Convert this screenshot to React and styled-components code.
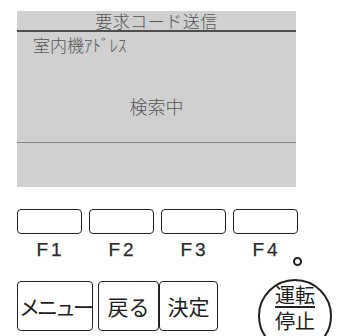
import React from 'react';
import styled, { createGlobalStyle } from 'styled-components';

const GlobalStyle = createGlobalStyle`
  html, body {
    margin: 0;
    padding: 0;
    background: #ffffff;
    overflow: hidden;
  }
  body {
    font-family: "Noto Sans CJK JP", "Liberation Sans", sans-serif;
  }
`;

const Panel = styled.div`
  width: 337px;
  height: 336px;
  padding: 11px 0 0 17px;
  box-sizing: border-box;
  overflow: hidden;
`;

const Screen = styled.div`
  width: 279px;
  height: 176px;
  background: #d0d0d0;
  display: flex;
  flex-direction: column;
  color: #555;
`;

const Title = styled.div`
  height: 19px;
  display: flex;
  align-items: flex-end;
  justify-content: center;
  font-size: 17px;
  font-weight: 300;
  line-height: 19px;
  letter-spacing: 0.5px;
  border-bottom: 2px solid #4e4e4e;
`;

const Body = styled.div`
  height: 110px;
  border-bottom: 1px solid #858585;
  display: flex;
  flex-direction: column;
`;

const Label = styled.div`
  padding: 3px 0 0 16px;
  font-size: 17px;
  font-weight: 300;
  line-height: 20px;
`;

const Status = styled.div`
  margin-top: 40px;
  text-align: center;
  font-size: 18px;
  font-weight: 300;
  line-height: 22px;
`;

const FGrid = styled.div`
  display: grid;
  grid-template-columns: repeat(4, 65px);
  column-gap: 7px;
  margin-top: ${p => p.$top}px;
`;

const FKey = styled.div`
  height: 25px;
  box-sizing: border-box;
  border: 1.5px solid #222;
  border-radius: 4px;
`;

const FLabel = styled.div`
  text-align: center;
  font-family: "Liberation Sans", Arial, sans-serif;
  font-size: 19px;
  line-height: 18px;
  letter-spacing: 3px;
  color: #2a2a2a;
  -webkit-text-stroke: 0.25px #2a2a2a;
  padding-left: 2px;
`;

const BottomRow = styled.div`
  display: flex;
  align-items: flex-start;
  margin-top: -2px;
`;

const KeyGroup = styled.div`
  display: flex;
  margin-top: 24px;
  gap: 5px;
`;

const Pair = styled.div`
  display: flex;
`;

const Key = styled.div`
  width: ${p => p.$w}px;
  height: 50px;
  box-sizing: border-box;
  border: 1.5px solid #222;
  border-radius: 4px;
  display: flex;
  align-items: center;
  justify-content: center;
  font-size: 21px;
  color: #1e1e1e;
  letter-spacing: ${p => p.$ls || 0}px;
`;

const PowerCol = styled.div`
  margin-left: auto;
  margin-right: 4px;
  display: flex;
  flex-direction: column;
  align-items: center;
  width: 76px;
`;

const Dot = styled.div`
  width: 9px;
  height: 9px;
  box-sizing: border-box;
  border: 2px solid #222;
  border-radius: 50%;
  margin-left: 4px;
`;

const PowerKey = styled.div`
  margin-top: 13px;
  width: 74px;
  height: 74px;
  box-sizing: border-box;
  border: 2px solid #222;
  border-radius: 50%;
  display: flex;
  flex-direction: column;
  align-items: center;
  padding-top: 3px;
  font-size: 20px;
  line-height: 21px;
  color: #1e1e1e;
`;

const PowerTop = styled.div`
  border-bottom: 2px solid #222;
  padding-bottom: 1px;
`;

const PowerBottom = styled.div`
  padding-top: 2px;
`;

export default function App() {
  return (
    <>
      <GlobalStyle />
      <Panel>
        <Screen>
          <Title>要求コード送信</Title>
          <Body>
            <Label>室内機ｱﾄﾞﾚｽ</Label>
            <Status>検索中</Status>
          </Body>
        </Screen>
        <FGrid $top={22}>
          <FKey /><FKey /><FKey /><FKey />
        </FGrid>
        <FGrid $top={7}>
          <FLabel>F1</FLabel>
          <FLabel>F2</FLabel>
          <FLabel>F3</FLabel>
          <FLabel>F4</FLabel>
        </FGrid>
        <BottomRow>
          <KeyGroup>
            <Key $w={76} $ls={-3}>メニュー</Key>
            <Pair>
              <Key $w={61}>戻る</Key>
              <Key $w={59}>決定</Key>
            </Pair>
          </KeyGroup>
          <PowerCol>
            <Dot />
            <PowerKey>
              <PowerTop>運転</PowerTop>
              <PowerBottom>停止</PowerBottom>
            </PowerKey>
          </PowerCol>
        </BottomRow>
      </Panel>
    </>
  );
}
